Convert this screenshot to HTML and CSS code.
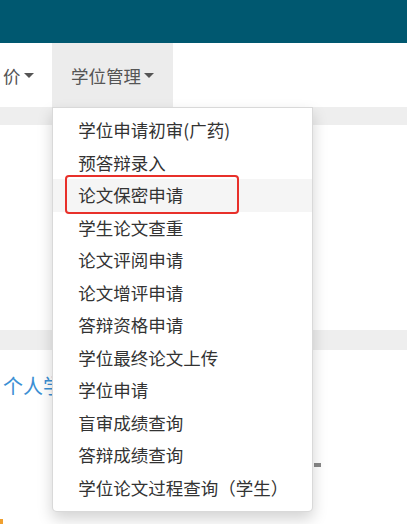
FILE: index.html
```html
<!DOCTYPE html>
<html lang="zh-CN">
<head>
<meta charset="utf-8">
<title>学位管理</title>
<link rel="stylesheet" href="styles.css">
</head>
<body>
<div class="page">
  <header class="topbar"></header>
  <nav class="navbar">
    <div class="nav-item first">价<span class="caret"></span></div>
    <div class="nav-item open">学位管理<span class="caret"></span>
      <ul class="dropdown">
        <li>学位申请初审(广药)</li>
        <li>预答辩录入</li>
        <li class="hover">论文保密申请<span class="mark"></span></li>
        <li>学生论文查重</li>
        <li>论文评阅申请</li>
        <li>论文增评申请</li>
        <li>答辩资格申请</li>
        <li>学位最终论文上传</li>
        <li>学位申请</li>
        <li>盲审成绩查询</li>
        <li>答辩成绩查询</li>
        <li>学位论文过程查询（学生）</li>
      </ul>
    </div>
  </nav>
  <div class="band band-top"></div>
  <div class="panel"></div>
  <div class="band band-mid"></div>
  <div class="title">个人学</div>
  <div class="tick"></div>
  <div class="corner"></div>
</div>
</body>
</html>
```
FILE: styles.css
```css
html, body {
  margin: 0;
  padding: 0;
  background: #fff;
}
body {
  font-family: "Noto Sans CJK SC", "Noto Sans", "Liberation Sans", sans-serif;
  width: 407px;
  height: 524px;
  overflow: hidden;
}
.page {
  display: flex;
  flex-direction: column;
}
.topbar {
  height: 43px;
  background: #005870;
}
.navbar {
  height: 64px;
  display: flex;
  background: #fff;
  position: relative;
  z-index: 2;
}
.nav-item {
  display: flex;
  align-items: center;
  padding: 0 18.75px;
  font-size: 17.5px;
  color: #555;
  position: relative;
}
.nav-item.first {
  padding-left: 3px;
}
.nav-item.open {
  background: #ececec;
  color: #555;
}
.caret {
  display: inline-block;
  width: 0;
  height: 0;
  margin-left: 3px;
  border-top: 5px solid #555;
  border-left: 5px solid transparent;
  border-right: 5px solid transparent;
}
.dropdown {
  position: absolute;
  left: 0;
  top: 64px;
  width: 259px;
  margin: 0;
  padding: 6.25px 0;
  list-style: none;
  background: #fff;
  border: 1px solid rgba(0, 0, 0, 0.15);
  border-radius: 0 0 5px 5px;
  box-shadow: 0 7px 15px rgba(0, 0, 0, 0.175);
}
.dropdown li {
  height: 32.5px;
  line-height: 32.5px;
  padding: 0 25px;
  font-size: 17.5px;
  color: #333;
  white-space: nowrap;
  position: relative;
}
.dropdown li.hover {
  background: #f5f5f5;
}
.mark {
  position: absolute;
  left: 12px;
  top: -4.5px;
  width: 170px;
  height: 35px;
  border: 2px solid #e8302a;
  border-radius: 4px;
}
.band {
  background: #eeeeee;
}
.band-top {
  height: 18px;
}
.panel {
  height: 205px;
  background: #fff;
}
.band-mid {
  height: 20px;
}
.title {
  margin-top: 22px;
  padding-left: 3px;
  width: 49px;
  overflow: hidden;
  font-size: 20px;
  line-height: 28px;
  color: #3b8fd4;
  white-space: nowrap;
}
.tick {
  margin-top: 63px;
  margin-left: 314px;
  width: 7px;
  height: 4px;
  background: #888;
}
.corner {
  margin-top: 52px;
  width: 3px;
  height: 5px;
  background: #f0a030;
}
```
